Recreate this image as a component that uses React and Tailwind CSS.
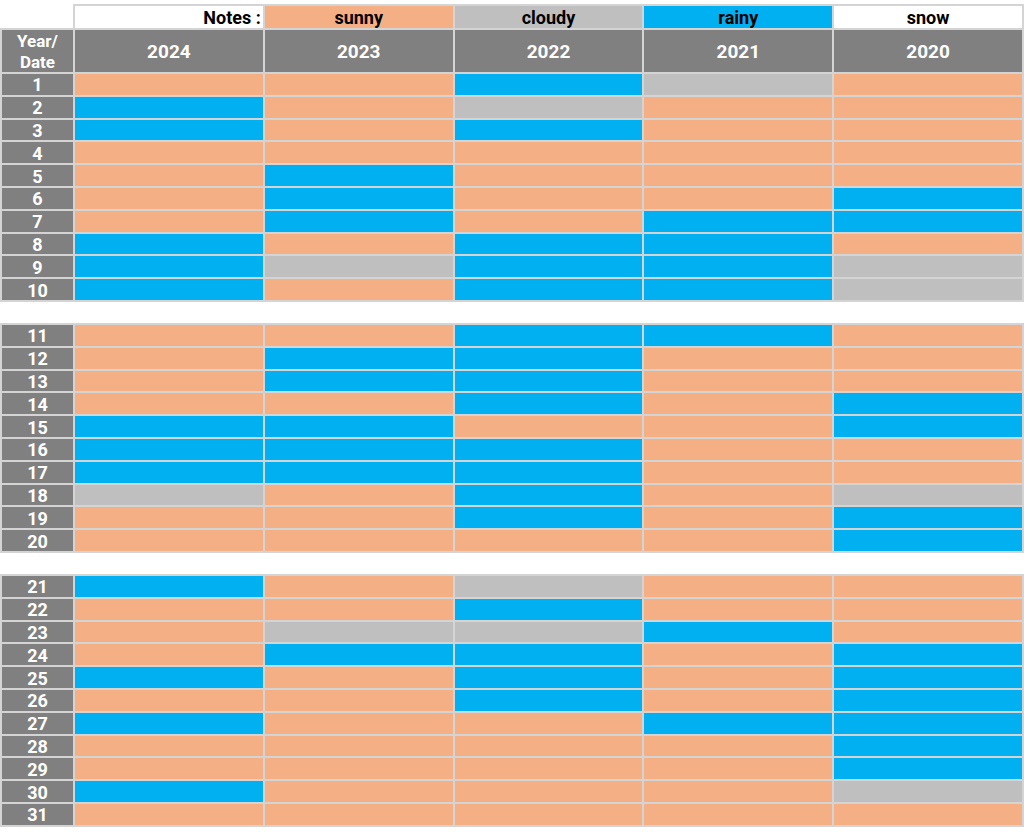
const fills = {
  O: "bg-[#f4b084]",
  B: "bg-[#00b0f0]",
  G: "bg-[#bfbfbf]",
};

// 2024, 2023, 2022, 2021, 2020
const days = [
  "OOBGO", "BOGOO", "BOBOO", "OOOOO", "OBOOO",
  "OBOOB", "OBOBB", "BOBBO", "BGBBG", "BOBBG",
  "OOBBO", "OBBOO", "OBBOO", "OOBOB", "BBOOB",
  "BBBOO", "BBBOO", "GOBOG", "OOBOB", "OOOOB",
  "BOGOO", "OOBOO", "OGGBO", "OBBOB", "BOBOB",
  "OOBOB", "BOOBB", "OOOOB", "OOOOB", "BOOOG",
  "OOOOO",
];

const years = ["2024", "2023", "2022", "2021", "2020"];

function DayRow({ day, pattern }) {
  return (
    <>
      <div className="h-[20.8px] pt-[2px] bg-[#808080] flex items-center justify-center text-white font-bold text-[18px] leading-none">
        {day}
      </div>
      {pattern.split("").map((c, i) => (
        <div key={i} className={`h-[20.8px] ${fills[c]}`} />
      ))}
    </>
  );
}

function Block({ from, to, children, className = "" }) {
  return (
    <div
      className={`grid grid-cols-[71px_repeat(5,1fr)] gap-[2px] p-[2px] bg-[#d4d4d4] ${className}`}
    >
      {children}
      {days.slice(from, to).map((p, i) => (
        <DayRow key={from + i} day={from + i + 1} pattern={p} />
      ))}
    </div>
  );
}

const legend = "h-[22px] pt-[2px] flex items-center text-[18px] font-bold text-black leading-none";

export default function App() {
  return (
    <div
      className="w-[1024px] h-[837px] bg-white pt-[4px] overflow-hidden"
      style={{ fontFamily: "Roboto, 'Liberation Sans', sans-serif" }}
    >
      <div className="w-[1024px]">
        {/* legend row */}
        <div className="grid grid-cols-[73px_1fr]">
          <div />
          <div className="grid grid-cols-5 gap-[2px] p-[2px] pb-0 bg-[#d4d4d4]">
            <div className={`${legend} bg-white justify-end pr-[2px]`}>Notes :</div>
            <div className={`${legend} bg-[#f4b084] justify-center`}>sunny</div>
            <div className={`${legend} bg-[#bfbfbf] justify-center`}>cloudy</div>
            <div className={`${legend} bg-[#00b0f0] justify-center`}>rainy</div>
            <div className={`${legend} bg-white justify-center`}>snow</div>
          </div>
        </div>

        <Block from={0} to={10}>
          <div className="h-[42px] pt-[1px] bg-[#808080] flex flex-col items-center justify-center text-white font-bold text-[17px] leading-[21px]">
            <span>Year/</span>
            <span>Date</span>
          </div>
          {years.map((y) => (
            <div
              key={y}
              className="h-[42px] pt-[2px] bg-[#808080] flex items-center justify-center text-white font-bold text-[19px]"
            >
              {y}
            </div>
          ))}
        </Block>

        <Block from={10} to={20} className="mt-[21px]" />
        <Block from={20} to={31} className="mt-[21px]" />
      </div>
    </div>
  );
}
